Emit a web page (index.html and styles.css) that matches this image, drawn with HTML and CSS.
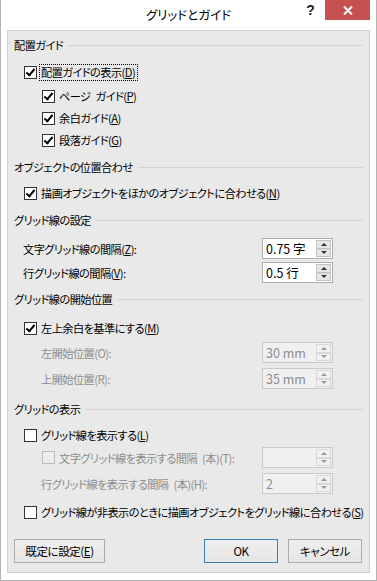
FILE: index.html
```html
<!DOCTYPE html>
<html lang="ja">
<head>
<meta charset="utf-8">
<title>グリッドとガイド</title>
<link rel="stylesheet" href="styles.css">
</head>
<body>
<div class="window">
  <div class="titlebar">
    <div class="title">グリッドとガイド</div>
    <div class="controls">
      <div class="help">?</div>
      <div class="close"><svg width="10" height="9" viewBox="0 0 10 9"><path d="M1 0.5 L9 8.5 M9 0.5 L1 8.5" stroke="#fff" stroke-width="2" fill="none"/></svg></div>
    </div>
  </div>
  <div class="client">
    <div class="hdr mt4"><span>配置ガイド</span></div>
    <div class="cb-row mt6"><span class="cb on"></span><span class="focus">配置ガイドの表示(<u>D</u>)</span></div>
    <div class="cb-row sub mt2"><span class="cb on"></span><span>ページ&ensp;ガイド(<u>P</u>)</span></div>
    <div class="cb-row sub"><span class="cb on"></span><span>余白ガイド(<u>A</u>)</span></div>
    <div class="cb-row sub"><span class="cb on"></span><span>段落ガイド(<u>G</u>)</span></div>

    <div class="hdr mt6"><span>オブジェクトの位置合わせ</span></div>
    <div class="cb-row mt5"><span class="cb on"></span><span>描画オブジェクトをほかのオブジェクトに合わせる(<u>N</u>)</span></div>

    <div class="hdr mt6"><span>グリッド線の設定</span></div>
    <div class="field mt8"><span class="lbl">文字グリッド線の間隔(<u>Z</u>):</span><div class="spin"><span class="val">0.75 字</span><span class="arrows"><span><i class="up"></i></span><span><i class="dn"></i></span></span></div></div>
    <div class="field mt3"><span class="lbl">行グリッド線の間隔(<u>V</u>):</span><div class="spin"><span class="val">0.5 行</span><span class="arrows"><span><i class="up"></i></span><span><i class="dn"></i></span></span></div></div>

    <div class="hdr mt6"><span>グリッド線の開始位置</span></div>
    <div class="cb-row mt8"><span class="cb on"></span><span>左上余白を基準にする(<u>M</u>)</span></div>
    <div class="field sub dis mt3"><span class="lbl">左開始位置(O):</span><div class="spin"><span class="val">30 mm</span><span class="arrows"><span><i class="up"></i></span><span><i class="dn"></i></span></span></div></div>
    <div class="field sub dis mt5"><span class="lbl">上開始位置(R):</span><div class="spin"><span class="val">35 mm</span><span class="arrows"><span><i class="up"></i></span><span><i class="dn"></i></span></span></div></div>

    <div class="hdr mt10"><span>グリッドの表示</span></div>
    <div class="cb-row mt5"><span class="cb"></span><span>グリッド線を表示する(<u>L</u>)</span></div>
    <div class="field sub dis mt1"><span class="lbl withcb"><span class="cb"></span><span>文字グリッド線を表示する間隔&ensp;(本)(T):</span></span><div class="spin"><span class="val"></span><span class="arrows"><span><i class="up"></i></span><span><i class="dn"></i></span></span></div></div>
    <div class="field sub dis mt5"><span class="lbl">行グリッド線を表示する間隔&ensp;(本)(H):</span><div class="spin"><span class="val">2</span><span class="arrows"><span><i class="up"></i></span><span><i class="dn"></i></span></span></div></div>
    <div class="cb-row mt7"><span class="cb"></span><span>グリッド線が非表示のときに描画オブジェクトをグリッド線に合わせる(<u>S</u>)</span></div>

    <div class="buttons">
      <button class="btn wide">既定に設定(<u>E</u>)</button>
      <button class="btn default">OK</button>
      <button class="btn cancel">キャンセル</button>
    </div>
  </div>
</div>
</body>
</html>
```
FILE: styles.css
```css
html, body {
  margin: 0;
  padding: 0;
  background: #fff;
}
body {
  font-family: "Noto Sans CJK JP", "Noto Sans", sans-serif;
  font-size: 12px;
  font-feature-settings: "palt";
  color: #000;
}
.window {
  width: 377px;
  height: 581px;
  box-sizing: border-box;
  border: 1px solid #b4b4b4;
  border-top: none;
  padding: 0 6px 7px;
  display: flex;
  flex-direction: column;
  background: #fff;
}
.titlebar {
  height: 30px;
  display: grid;
  grid-template-columns: 1fr auto 1fr;
  flex: none;
}
.title {
  grid-column: 2;
  align-self: center;
  font-size: 12.5px;
  color: #000;
  line-height: 16px;
}
.controls {
  grid-column: 3;
  justify-self: end;
  align-self: start;
  display: flex;
}
.help {
  width: 29px;
  height: 20px;
  display: flex;
  align-items: center;
  justify-content: center;
  font-family: "Liberation Sans", sans-serif;
  font-weight: bold;
  font-size: 14px;
  color: #222;
}
.close {
  width: 45px;
  height: 20px;
  background: #c75050;
  display: flex;
  align-items: center;
  justify-content: center;
}
.client {
  flex: 1;
  border: 1px solid #cfcfcf;
  background: #e9e9e9;
  padding: 0 6px;
  display: flex;
  flex-direction: column;
  font-size: 11.2px;
  letter-spacing: -0.55px;
}
.mt1 { margin-top: 1px; }
.mt2 { margin-top: 2px; }
.mt3 { margin-top: 3px; }
.mt4 { margin-top: 4px; }
.mt5 { margin-top: 5px; }
.mt6 { margin-top: 6px; }
.mt7 { margin-top: 7px; }
.mt8 { margin-top: 8px; }
.mt10 { margin-top: 10px; }

.hdr {
  height: 20px;
  display: flex;
  align-items: center;
  gap: 5px;
  white-space: nowrap;
}
.hdr::after {
  content: "";
  flex: 1;
  height: 1px;
  background: #d4d4d4;
}
.cb-row {
  height: 22px;
  display: flex;
  align-items: center;
  gap: 3px;
  padding-left: 10px;
  white-space: nowrap;
}
.cb-row.sub { padding-left: 28px; }
.cb {
  flex: none;
  width: 13px;
  height: 13px;
  box-sizing: border-box;
  border: 1px solid #333;
  background: #fff;
  position: relative;
  margin-right: 1px;
}
.cb.on::after {
  content: "";
  position: absolute;
  left: 3px;
  top: 0px;
  width: 3px;
  height: 7px;
  border: solid #000;
  border-width: 0 2px 2px 0;
  transform: rotate(40deg);
}
.focus {
  outline: 1px dotted #000;
  outline-offset: 0;
  padding: 0 2px 0 1px;
  line-height: 15px;
  margin-left: -1px;
}
.field {
  height: 21px;
  display: flex;
  align-items: center;
  padding-left: 9px;
  white-space: nowrap;
}
.field.sub { padding-left: 27px; }
.lbl { flex: 1; }
.withcb {
  display: flex;
  align-items: center;
  gap: 3px;
  margin-left: 1px;
}
.dis { color: #8d8d8d; }
.dis .cb {
  border-color: #bcbcbc;
  background: #ececec;
}
.spin {
  flex: none;
  width: 71px;
  height: 21px;
  box-sizing: border-box;
  border: 1px solid #abadb3;
  background: #fff;
  display: flex;
  margin-right: 30px;
}
.dis .spin {
  border-color: #c9c9c9;
  background: #f0f0f0;
}
.val {
  flex: 1;
  padding-left: 3px;
  line-height: 19px;
  font-size: 12.5px;
  letter-spacing: 0;
}
.arrows {
  width: 16px;
  display: flex;
  flex-direction: column;
  padding: 1px 1px 1px 0;
  box-sizing: border-box;
}
.arrows > span {
  flex: 1;
  border: 1px solid #c2c2c2;
  background: #e6e6e6;
  display: flex;
  align-items: center;
  justify-content: center;
}
.arrows > span + span { border-top-color: #d6d6d6; }
.dis .arrows > span {
  border-color: #d9d9d9;
  background: #f0f0f0;
}
.up, .dn {
  width: 0;
  height: 0;
  border-left: 3px solid transparent;
  border-right: 3px solid transparent;
}
.up { border-bottom: 3px solid #333; }
.dn { border-top: 3px solid #333; }
.dis .up { border-bottom-color: #9a9a9a; }
.dis .dn { border-top-color: #9a9a9a; }

.buttons {
  margin-top: 16px;
  display: flex;
  height: 24px;
}
.btn {
  font-family: inherit;
  font-size: 11.5px;
  letter-spacing: -0.4px;
  font-feature-settings: "palt";
  color: #000;
  height: 24px;
  padding: 0;
  border: 1px solid #acacac;
  background: linear-gradient(#efefef, #e5e5e5);
  border-radius: 0;
}
.btn.wide { width: 91px; }
.btn.default {
  width: 74px;
  margin-left: auto;
  border-color: #3c7fb1;
}
.btn.cancel {
  width: 74px;
  margin-left: 10px;
  margin-right: 1px;
}
```
